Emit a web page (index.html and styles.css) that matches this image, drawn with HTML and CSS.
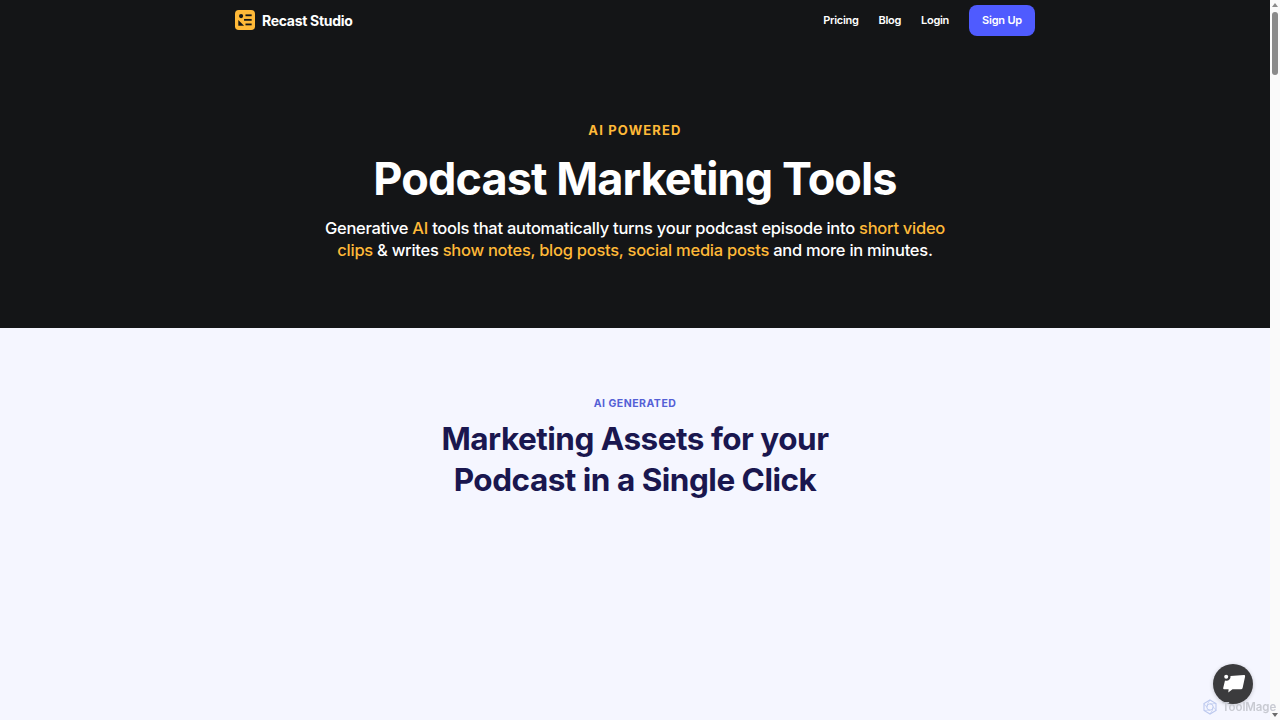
FILE: index.html
```html
<!DOCTYPE html>
<html lang="en">
<head>
<meta charset="utf-8">
<title>Recast Studio</title>
<link rel="stylesheet" href="styles.css">
</head>
<body>
<div class="page">
  <main class="content">
    <section class="dark">
      <header class="nav">
        <a class="brand" href="#">
          <svg class="logo" width="20" height="20" viewBox="0 0 21 21">
            <rect width="21" height="21" rx="4" fill="#ffb938"/>
            <circle cx="6.4" cy="6.4" r="2.2" fill="#141517"/>
            <rect x="11" y="4.6" width="6.5" height="1.9" fill="#141517"/>
            <rect x="9.5" y="9.4" width="8" height="1.9" fill="#141517"/>
            <rect x="11" y="14.2" width="6.5" height="1.9" fill="#141517"/>
            <path d="M3.5 10.5 L9.5 16.5 H3.5 Z" fill="#141517"/>
          </svg>
          <span>Recast Studio</span>
        </a>
        <nav class="links">
          <a href="#">Pricing</a>
          <a href="#">Blog</a>
          <a href="#">Login</a>
          <a class="signup" href="#">Sign Up</a>
        </nav>
      </header>
      <div class="hero">
        <p class="eyebrow">AI POWERED</p>
        <h1>Podcast Marketing Tools</h1>
        <p class="lead">Generative <em>AI</em> tools that automatically turns your podcast episode into <em>short video clips</em> &amp; writes <em>show notes, blog posts, social media posts</em> and more in minutes.</p>
      </div>
    </section>
    <section class="light">
      <p class="kicker">AI GENERATED</p>
      <h2>Marketing Assets for your<br>Podcast in a Single Click</h2>
    </section>
  </main>
  <aside class="scrollbar">
    <span class="arrow-up"></span>
    <span class="thumb"></span>
    <span class="spacer"></span>
    <span class="arrow-down"></span>
  </aside>
</div>
<button class="chat" aria-label="Chat">
  <svg width="40" height="40" viewBox="0 0 40 40">
    <path d="M17.5 12 L31 11 Q32.4 11 32.1 12.4 L29.6 24 Q29.3 25.3 28 25.3 H19.5 L15.3 28.6 L15.6 25.3 H11.2 Q9.9 25.3 10.2 24 L12 16.5 Q14.6 17.4 16.4 15.6 Q17.8 14 17.5 12 Z" fill="#fff"/>
    <circle cx="13.2" cy="12.8" r="2" fill="#fff"/>
  </svg>
</button>
<div class="watermark">
  <svg width="16" height="16" viewBox="0 0 16 16" fill="none" stroke="#bcc8ee" stroke-width="1.1">
    <path d="M8 1 L14 4.5 V11.5 L8 15 L2 11.5 V4.5 Z"/>
    <circle cx="8" cy="8" r="3.2" stroke-width="1"/>
    <path d="M8 1 Q4.8 5 4.8 8 M14 4.5 Q10 4.8 8 4.8 M14 11.5 Q12 8 11.2 8 M8 15 Q11.2 11 11.2 8 M2 11.5 Q6 11.2 8 11.2 M2 4.5 Q4 8 4.8 8" stroke-width=".7"/>
  </svg>
  <span>ToolMage</span>
</div>
</body>
</html>
```
FILE: styles.css
```css
* { box-sizing: border-box; }
html, body { margin: 0; height: 100%; overflow: hidden; }
body { font-family: Inter, "Noto Sans", "Liberation Sans", sans-serif; background: #f5f6ff; }
a { text-decoration: none; color: inherit; }
p, h1, h2 { margin: 0; }

.page { display: flex; height: 720px; }
.content { flex: 1; min-width: 0; display: flex; flex-direction: column; }
.dark { height: 328px; background: #141517; color: #fff; }
.light { flex: 1; background: #f5f6ff; text-align: center; padding-top: 68px; }

.nav { width: 800px; margin: 0 auto; height: 40px; display: flex; align-items: center; justify-content: space-between; }
.brand { display: flex; align-items: center; gap: 7px; font-size: 14px; font-weight: 700; letter-spacing: -0.3px; }
.logo { display: block; }
.links { display: flex; align-items: center; gap: 20px; font-size: 11px; font-weight: 600; letter-spacing: -0.3px; }
.signup { width: 66px; height: 31px; display: flex; align-items: center; justify-content: center; background: #4f5bff; border-radius: 8px; letter-spacing: -0.2px; }

.hero { text-align: center; padding-top: 82px; }
.eyebrow { font-size: 13px; font-weight: 700; line-height: 16px; letter-spacing: 1.15px; color: #ffb938; }
h1 { margin-top: 13px; font-size: 45px; line-height: 56px; font-weight: 700; letter-spacing: -0.9px; }
.lead { width: 640px; margin: 10px auto 0; font-size: 16.5px; line-height: 22px; font-weight: 500; letter-spacing: -0.27px; }
.lead em { font-style: normal; color: #ffb938; }

.kicker { font-size: 10.5px; font-weight: 700; line-height: 16px; letter-spacing: 0.5px; color: #5460d6; }
h2 { margin-top: 6px; font-size: 31.5px; line-height: 41px; font-weight: 700; letter-spacing: -0.5px; color: #1a174f; }

.scrollbar { width: 10px; background: #fafafa; display: flex; flex-direction: column; align-items: center; }
.arrow-up { margin-top: 3px; width: 0; height: 0; border-left: 3px solid transparent; border-right: 3px solid transparent; border-bottom: 4px solid #8a8a8a; }
.thumb { width: 6px; height: 63px; margin-top: 5px; background: #8a8a8a; border-radius: 3px; }
.spacer { flex: 1; }
.arrow-down { margin-bottom: 3px; width: 0; height: 0; border-left: 3px solid transparent; border-right: 3px solid transparent; border-top: 4px solid #6b6b6b; }

.chat { position: fixed; left: 1213px; top: 664px; width: 40px; height: 40px; padding: 0; border: 0; border-radius: 50%; background: #3b3b3d; display: flex; align-items: center; justify-content: center; box-shadow: 0 1px 4px rgba(0,0,0,.2); }
.watermark { position: fixed; left: 1202px; top: 699px; display: flex; align-items: center; gap: 4px; font-size: 11.5px; font-weight: 600; letter-spacing: -0.1px; color: #c8cad2; }
```
